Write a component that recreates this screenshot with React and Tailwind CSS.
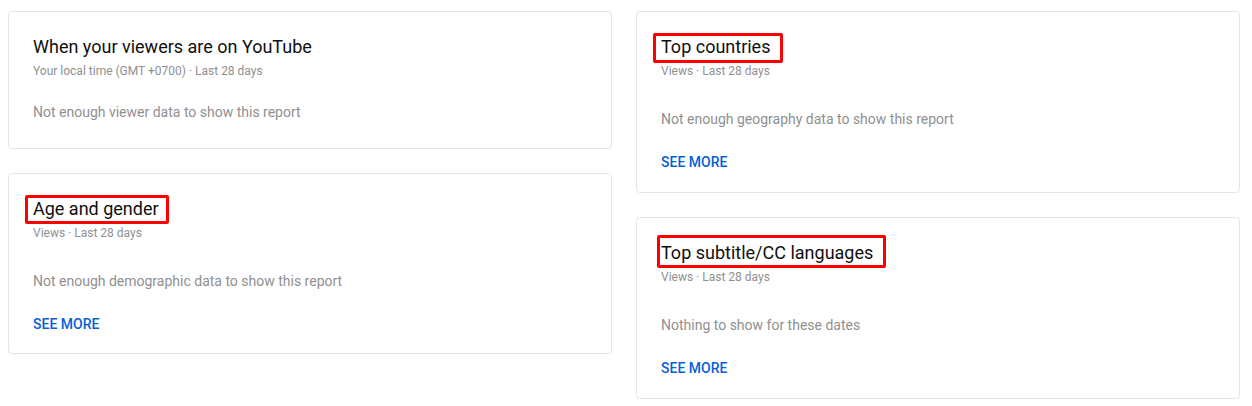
import React from 'react';

const font = { fontFamily: 'Roboto, "Liberation Sans", Arial, sans-serif' };

function Title({ text, box }) {
    return (
        <h3 className="relative self-start text-[18px] leading-6 font-normal text-[#0f0f0f]">
            {text}
            {box && <span className={`absolute border-[3px] border-[#ff0000] rounded-[2px] ${box}`} />}
        </h3>
    );
}

function Card({ title, subtitle, body, seeMore, box, first, tight }) {
    const pb = first ? 'pb-[26px]' : tight ? 'pb-[19px]' : 'pb-[20px]';
    return (
        <div className={`flex flex-col bg-white border border-[#e5e5e5] rounded-[4px] pl-6 pr-6 pt-[23px] ${pb}`}>
            <Title text={title} box={box} />
            <p className="mt-1 text-[12px] leading-4 text-[#909090]">{subtitle}</p>
            <p className={`${first ? 'mt-[23px]' : 'mt-[30px]'} text-[14px] leading-5 text-[#909090]`}>{body}</p>
            {seeMore && (
                <button className="self-start mt-[23px] text-[14px] leading-5 font-medium uppercase text-[#065fd4]">
                    See more
                </button>
            )}
        </div>
    );
}

export default function App() {
    return (
        <div className="w-[1252px] h-[406px] bg-white pl-2 pt-[11px]" style={font}>
            <div className="grid grid-cols-[604px_604px] gap-x-6 items-start">
                {/* Left column */}
                <div className="flex flex-col gap-6">
                    <Card
                        first
                        title="When your viewers are on YouTube"
                        subtitle="Your local time (GMT +0700) · Last 28 days"
                        body="Not enough viewer data to show this report"
                    />
                    <Card
                        tight
                        title="Age and gender"
                        subtitle="Views · Last 28 days"
                        body="Not enough demographic data to show this report"
                        seeMore
                        box="-left-2 -right-[10px] -top-[2px] -bottom-[3px]"
                    />
                </div>

                {/* Right column */}
                <div className="flex flex-col gap-6">
                    <Card
                        title="Top countries"
                        subtitle="Views · Last 28 days"
                        body="Not enough geography data to show this report"
                        seeMore
                        box="-left-2 -right-[13px] -top-[2px] -bottom-[4px]"
                    />
                    <Card
                        title="Top subtitle/CC languages"
                        subtitle="Views · Last 28 days"
                        body="Nothing to show for these dates"
                        seeMore
                        box="-left-1 -right-[13px] -top-[6px] -bottom-[3px]"
                    />
                </div>
            </div>
        </div>
    );
}
